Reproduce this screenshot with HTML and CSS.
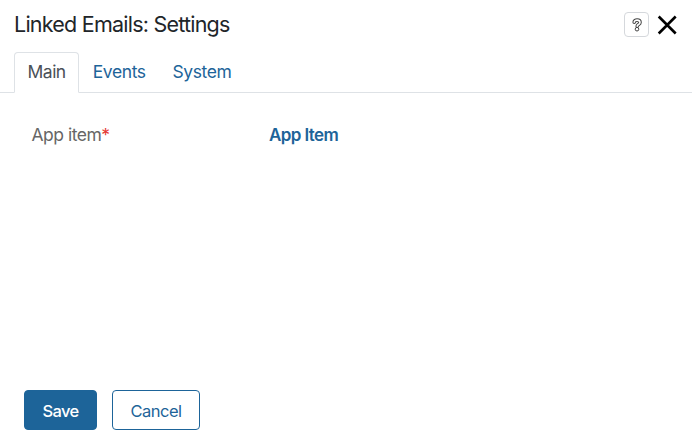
FILE: index.html
```html
<!DOCTYPE html>
<html lang="en">
<head>
<meta charset="utf-8">
<title>Linked Emails: Settings</title>
<link rel="stylesheet" href="styles.css">
</head>
<body>
<section class="dialog">
  <header class="header">
    <h1 class="title">Linked Emails: Settings</h1>
    <button class="help" aria-label="Help"><svg width="12" height="16" viewBox="0 0 12 16"><path class="q-outer" d="M3.2 5.2C3.2 2.4 9 2.4 9 5.4C9 7.6 6.2 7.4 6.2 9.2"/><circle cx="6" cy="12.2" r="1.8"/><path class="q-inner" d="M3.2 5.2C3.2 2.4 9 2.4 9 5.4C9 7.6 6.2 7.4 6.2 9.2"/></svg></button>
    <button class="close" aria-label="Close"><svg width="20" height="20" viewBox="0 0 20 20"><path d="M1.7 1.5l17 17M18.7 1.5l-17 17"/></svg></button>
  </header>
  <nav class="tabs">
    <a class="tab active">Main</a>
    <a class="tab">Events</a>
    <a class="tab">System</a>
  </nav>
  <main class="content">
    <div class="label">App item<span class="required">*</span></div>
    <a class="value">App Item</a>
  </main>
  <footer class="footer">
    <button class="btn primary">Save</button>
    <button class="btn">Cancel</button>
  </footer>
</section>
</body>
</html>
```
FILE: styles.css
```css
* { box-sizing: border-box; }
body { margin: 0; font-family: Inter, "Liberation Sans", sans-serif; color: #212529; background: #fff; }
button { font: inherit; padding: 0; background: none; border: 0; }
svg { display: block; }
.dialog { height: 438px; display: flex; flex-direction: column; }
.header { height: 52px; display: flex; align-items: center; padding: 0 15px 0 14px; flex: none; }
.title { margin: 0 auto 5px 0; font-size: 21.5px; font-weight: 400; letter-spacing: -.77px; line-height: 28px; }
.help { width: 25px; height: 25px; border: 1px solid #d5d8dc; border-radius: 4px; display: grid; place-items: center; margin: 0 8px 3px 0; }
.help path { fill: none; stroke-linecap: round; }
.help .q-outer { stroke: #444; stroke-width: 3.6; }
.help .q-inner { stroke: #fff; stroke-width: 1.6; }
.help circle { fill: #fff; stroke: #444; }
.close { margin-bottom: 2px; }
.close path { stroke: #000; stroke-width: 2.6; }
.tabs { height: 41px; flex: none; display: flex; padding-left: 14px; border-bottom: 1px solid #dee2e6; }
.tab { height: 41px; padding: 0 12.2px 0 12.7px; border: 1px solid transparent; line-height: 38px; font-size: 17.5px; letter-spacing: -.4px; color: #1d6499; }
.active { width: 65px; padding-left: 12.5px; letter-spacing: -.5px; color: #495057; background: #fff; border-color: #dee2e6 #dee2e6 #fff; border-radius: 4px 4px 0 0; }
.content { flex: 1; display: grid; grid-template-columns: 237.5px 1fr; align-content: start; padding: 30px 31.5px; font-size: 17.5px; line-height: 25px; letter-spacing: -.5px; }
.label { color: #666; line-height: 23px; }
.required { color: #e53935; }
.value { color: #1d6499; font-size: 17px; font-weight: 600; letter-spacing: -.6px; }
.footer { display: flex; gap: 15px; padding: 0 24px 8px; }
.btn { width: 88px; height: 40px; padding-top: 2px; border: 1px solid #1d6499; border-radius: 4px; color: #1d6499; font-size: 16.5px; letter-spacing: -.5px; }
.primary { width: 73px; background: #1d6499; color: #fff; font-weight: 550; letter-spacing: -.6px; }
```
